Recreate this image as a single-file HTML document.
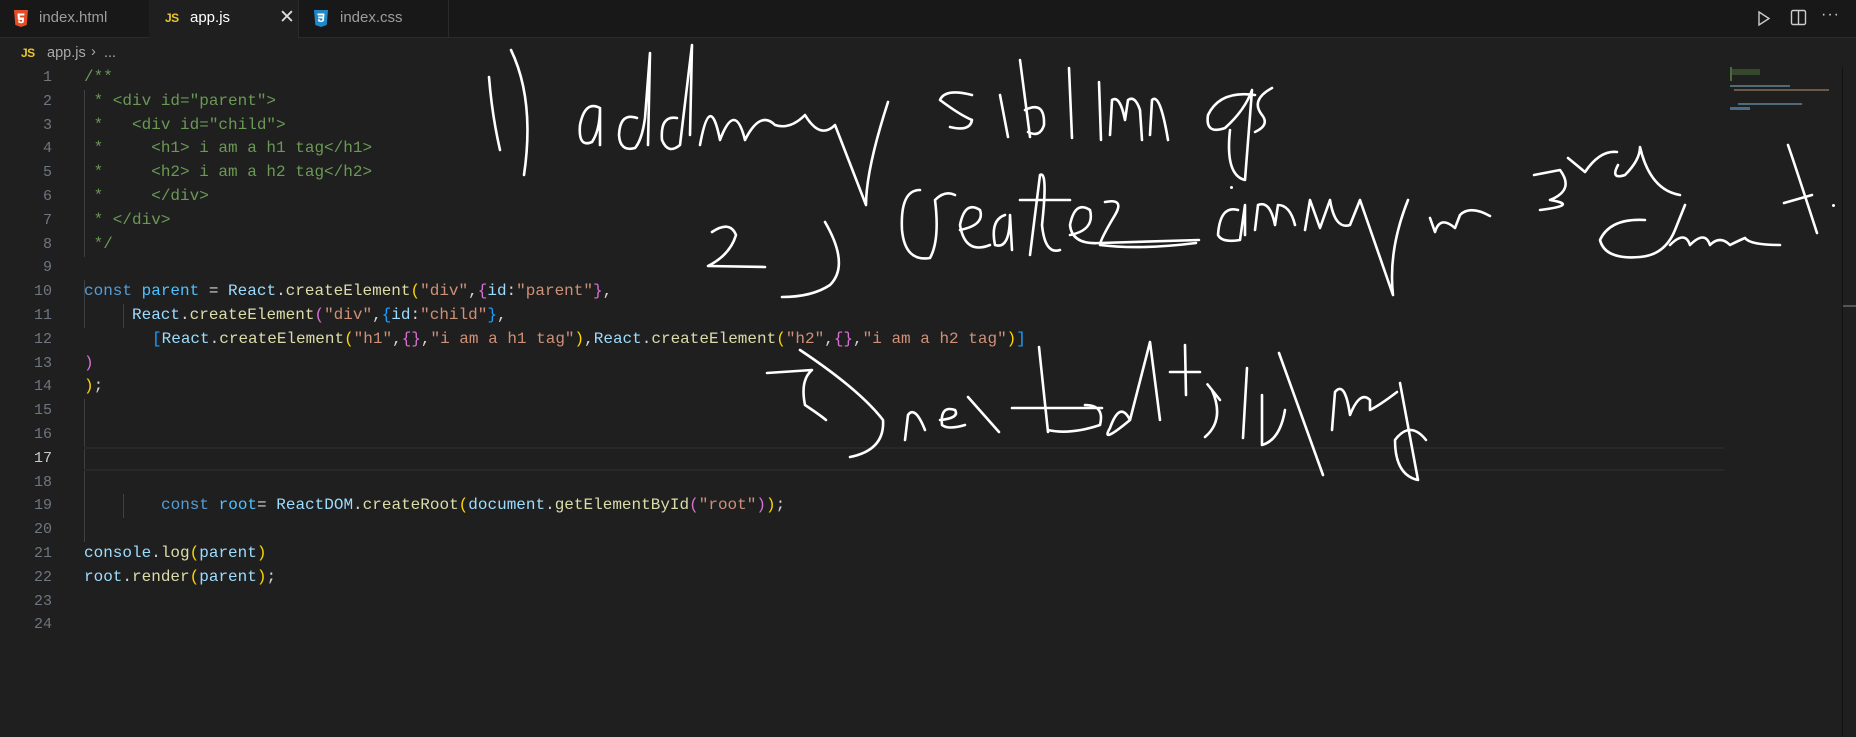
<!DOCTYPE html>
<html><head><meta charset="utf-8"><style>
*{margin:0;padding:0;box-sizing:border-box}
body{width:1856px;height:737px;background:#1f1f1f;overflow:hidden;position:relative;font-family:"Liberation Sans",sans-serif}
.tabs{position:absolute;left:0;top:0;width:1856px;height:38px;background:#181818;border-bottom:1px solid #2b2b2b}
.tab{position:absolute;top:0;height:38px;width:150px;border-right:1px solid #2b2b2b;color:#9d9d9d;font-size:15px;line-height:36px}
.tab.act{background:#1f1f1f;color:#fff;height:39px}
.ic{position:absolute;top:0}
.js{color:#e8c532;font-weight:bold;font-size:12px;letter-spacing:-0.5px}
.bc{position:absolute;left:0;top:44px;height:22px;font-size:14.5px;color:#a9a9a9}
.code{position:absolute;left:0;top:66px;font-family:"Liberation Mono",monospace;font-size:16px;line-height:23.8px;white-space:pre}
.ln{position:absolute;left:0;width:52px;text-align:right;color:#6e7681;font-family:"Liberation Mono",monospace;font-size:15px}
.l{position:absolute;left:84px;color:#d4d4d4}
.c{color:#6a9955}.k{color:#569cd6}.v{color:#4fc1ff}.r{color:#9cdcfe}.f{color:#dcdcaa}.s{color:#ce9178}
.g{color:#ffd700}.p{color:#da70d6}.b{color:#179fff}
.guide{position:absolute;width:1px;background:#404040}
</style></head><body>
<div class="tabs">
 <div class="tab" style="left:0"><svg class="ic" style="left:14px;top:10px" width="14" height="17" viewBox="0 0 14 17"><path d="M0 0h14l-1.3 15L7 17 1.3 15z" fill="#e44d26"/><path d="M3.5 3.5h7l-.2 2H5.7l.2 2h4.2l-.4 5L7 13.4 4.3 12.5l-.2-2h1.8l.1 1 1 .3 1-.3.1-1.6H3.9z" fill="#fff"/></svg><span style="position:absolute;left:39px">index.html</span></div>
 <div class="tab act" style="left:149px"><span class="js" style="position:absolute;left:16px">JS</span><span style="position:absolute;left:41px">app.js</span><span style="position:absolute;left:130px;font-size:19px;color:#ddd">✕</span></div>
 <div class="tab" style="left:299px"><svg class="ic" style="left:15px;top:10px" width="14" height="17" viewBox="0 0 14 17"><path d="M0 0h14l-1.3 15L7 17 1.3 15z" fill="#1f88c9"/><path d="M3.5 3.5h7l-.6 7.6L7 12.2l-2.9-1-.2-2h1.8l.1 1 1.2.4 1.2-.4.2-1.8H4.3l-.2-1.9h4.7l.1-1.1H3.6z" fill="#fff"/></svg><span style="position:absolute;left:41px">index.css</span></div>
 <svg style="position:absolute;left:1757px;top:10px" width="14" height="17" viewBox="0 0 14 17"><path d="M2 2l10 6.5L2 15z" fill="none" stroke="#ccc" stroke-width="1.4"/></svg>
 <svg style="position:absolute;left:1790px;top:9px" width="17" height="17" viewBox="0 0 17 17"><rect x="1.5" y="1.5" width="14" height="14" rx="1.5" fill="none" stroke="#ccc" stroke-width="1.4"/><path d="M8.5 1.5v14" stroke="#ccc" stroke-width="1.4"/></svg>
 <span style="position:absolute;left:1821px;top:6px;color:#ccc;font-size:16px;letter-spacing:1px">···</span>
</div>
<div class="bc"><span class="js" style="position:absolute;left:21px;top:2px">JS</span><span style="position:absolute;left:47px;top:1px">app.js</span><span style="position:absolute;left:91px;top:0px">›</span><span style="position:absolute;left:104px;top:1px">...</span></div>
<div class="guide" style="left:84px;top:90px;height:167px"></div>
<div class="guide" style="left:84px;top:280px;height:48px"></div>
<div class="guide" style="left:123px;top:304px;height:24px"></div>
<div class="guide" style="left:84px;top:399px;height:143px"></div>
<div class="guide" style="left:123px;top:494px;height:24px"></div>
<div style="position:absolute;left:84px;top:447px;width:1640px;height:24px;border-top:2px solid #282828;border-bottom:2px solid #282828"></div>
<div class="code">
<div class="ln" style="top:0">1</div><div class="l c" style="top:0">/**</div>
<div class="ln" style="top:23.8px">2</div><div class="l c" style="top:23.8px"> * &lt;div id="parent"&gt;</div>
<div class="ln" style="top:47.6px">3</div><div class="l c" style="top:47.6px"> *   &lt;div id="child"&gt;</div>
<div class="ln" style="top:71.4px">4</div><div class="l c" style="top:71.4px"> *     &lt;h1&gt; i am a h1 tag&lt;/h1&gt;</div>
<div class="ln" style="top:95.2px">5</div><div class="l c" style="top:95.2px"> *     &lt;h2&gt; i am a h2 tag&lt;/h2&gt;</div>
<div class="ln" style="top:119px">6</div><div class="l c" style="top:119px"> *     &lt;/div&gt;</div>
<div class="ln" style="top:142.8px">7</div><div class="l c" style="top:142.8px"> * &lt;/div&gt;</div>
<div class="ln" style="top:166.6px">8</div><div class="l c" style="top:166.6px"> */</div>
<div class="ln" style="top:190.4px">9</div>
<div class="ln" style="top:214.2px">10</div><div class="l" style="top:214.2px"><span class="k">const</span> <span class="v">parent</span> = <span class="r">React</span>.<span class="f">createElement</span><span class="g">(</span><span class="s">"div"</span>,<span class="p">{</span><span class="r">id</span>:<span class="s">"parent"</span><span class="p">}</span>,</div>
<div class="ln" style="top:238px">11</div><div class="l" style="top:238px;left:132px"><span class="r">React</span>.<span class="f">createElement</span><span class="p">(</span><span class="s">"div"</span>,<span class="b">{</span><span class="r">id</span>:<span class="s">"child"</span><span class="b">}</span>,</div>
<div class="ln" style="top:261.8px">12</div><div class="l" style="top:261.8px;left:152px"><span class="b">[</span><span class="r">React</span>.<span class="f">createElement</span><span class="g">(</span><span class="s">"h1"</span>,<span class="p">{}</span>,<span class="s">"i am a h1 tag"</span><span class="g">)</span>,<span class="r">React</span>.<span class="f">createElement</span><span class="g">(</span><span class="s">"h2"</span>,<span class="p">{}</span>,<span class="s">"i am a h2 tag"</span><span class="g">)</span><span class="b">]</span></div>
<div class="ln" style="top:285.6px">13</div><div class="l p" style="top:285.6px">)</div>
<div class="ln" style="top:309.4px">14</div><div class="l" style="top:309.4px"><span class="g">)</span>;</div>
<div class="ln" style="top:333.2px">15</div>
<div class="ln" style="top:357px">16</div>
<div class="ln" style="top:380.8px;color:#ccc">17</div>
<div class="ln" style="top:404.6px">18</div>
<div class="ln" style="top:428.4px">19</div><div class="l" style="top:428.4px;left:161px"><span class="k">const</span> <span class="v">root</span>= <span class="r">ReactDOM</span>.<span class="f">createRoot</span><span class="g">(</span><span class="r">document</span>.<span class="f">getElementById</span><span class="p">(</span><span class="s">"root"</span><span class="p">)</span><span class="g">)</span>;</div>
<div class="ln" style="top:452.2px">20</div>
<div class="ln" style="top:476px">21</div><div class="l" style="top:476px"><span class="r">console</span>.<span class="f">log</span><span class="g">(</span><span class="r">parent</span><span class="g">)</span></div>
<div class="ln" style="top:499.8px">22</div><div class="l" style="top:499.8px"><span class="r">root</span>.<span class="f">render</span><span class="g">(</span><span class="r">parent</span><span class="g">)</span>;</div>
<div class="ln" style="top:523.6px">23</div>
<div class="ln" style="top:547.4px">24</div>
</div>
<!-- minimap -->
<div style="position:absolute;left:1730px;top:67px;width:2px;height:14px;background:#4a6b3c"></div>
<div style="position:absolute;left:1732px;top:69px;width:28px;height:6px;background:#3f5a35;opacity:.7"></div>
<div style="position:absolute;left:1730px;top:85px;width:60px;height:2px;background:#506a7a"></div>
<div style="position:absolute;left:1734px;top:89px;width:95px;height:2px;background:#6a5a4a"></div>
<div style="position:absolute;left:1738px;top:103px;width:64px;height:2px;background:#506a7a"></div>
<div style="position:absolute;left:1730px;top:107px;width:20px;height:3px;background:#4a6a8a"></div>
<div style="position:absolute;left:1842px;top:67px;width:1px;height:670px;background:#111"></div>
<div style="position:absolute;left:1843px;top:305px;width:13px;height:2px;background:#555"></div>
<svg style="position:absolute;left:0;top:0" width="1856" height="737" fill="none" stroke="#fff" stroke-width="2.6" stroke-linecap="round" stroke-linejoin="round">
<path d="M489 77Q492 115 500 150M511 50Q535 100 524 175"/>
<path d="M600 108Q585 100 580 125Q578 148 592 142Q600 130 600 108L600 145"/>
<path d="M637 118Q620 112 619 135Q620 152 635 148Q642 140 645 118L650 53L648 145"/>
<path d="M677 118Q660 115 662 140Q668 155 680 145L692 45L690 135"/>
<path d="M700 145Q710 90 720 140Q735 100 745 140Q760 110 775 125Q790 130 805 115Q820 140 835 125L866 205Q866 170 888 102"/>
<path d="M972 95Q945 88 940 100Q960 115 972 120Q970 132 950 127M1000 95L1008 137M1020 60L1030 137M1025 110Q1045 100 1044 125Q1040 138 1028 132M1069 68L1072 138M1099 82L1101 140M1110 135L1112 100Q1120 95 1125 120L1128 100Q1135 95 1140 110L1142 140M1150 135L1152 100Q1160 92 1168 140"/>
<path d="M1255 95Q1220 90 1208 115Q1205 135 1225 128Q1245 110 1252 90L1245 180Q1225 175 1230 130M1272 88Q1250 100 1262 115Q1270 125 1255 132"/>
<path d="M712 232Q730 220 736 235Q730 255 708 266L765 267M825 222Q850 265 830 285Q812 297 782 297"/>
<path d="M920 190Q900 190 902 230Q905 262 930 258Q940 240 935 200Q945 190 955 195M960 230Q985 225 980 210Q965 200 960 225Q965 255 990 245M1005 215Q990 220 995 245Q1010 250 1010 215L1012 250M1030 255L1040 175Q1048 170 1042 225Q1045 255 1060 250M1020 200L1070 200M1070 235Q1095 230 1090 210Q1075 200 1070 225Q1072 245 1100 243L1199 240"/>
<path d="M1238 210Q1220 205 1218 235Q1222 243 1240 240L1245 205L1245 235M1255 230L1258 205Q1270 200 1275 225L1278 205Q1290 205 1295 225M1305 230L1310 200L1320 228L1330 200Q1335 230 1350 225L1360 200L1393 295Q1388 250 1408 200M1430 218L1435 232Q1440 215 1455 228L1460 215Q1470 205 1490 216"/>
<path d="M1105 202Q1125 198 1115 215Q1100 240 1100 245Q1140 250 1196 243"/>
<path d="M1534 175L1560 170Q1575 190 1550 200Q1580 205 1540 210M1568 158L1585 172Q1600 150 1617 152M1618 165Q1610 180 1625 175Q1640 160 1640 147Q1650 190 1680 195"/>
<path d="M1645 220Q1610 218 1600 240Q1605 260 1640 257Q1665 255 1675 230L1685 205M1670 245Q1685 230 1690 245Q1705 230 1710 245Q1720 235 1730 245Q1740 240 1745 238Q1750 245 1780 245M1788 145Q1795 165 1817 233M1784 203L1812 195"/>
<path d="M767 373L812 370Q800 380 805 405Q820 415 826 420M800 350Q860 390 883 420Q885 450 850 457"/>
<path d="M905 440L908 415Q915 405 925 430M940 420Q960 418 955 410Q940 405 942 425Q948 430 965 425M968 397L999 432M1039 347L1048 432M1012 408L1102 408M1048 430Q1070 435 1100 425Q1105 405 1085 405M1130 420Q1120 400 1110 428Q1100 445 1130 420L1150 342Q1155 380 1160 420M1170 372L1200 372M1185 345L1186 395"/>
<path d="M1220 400Q1200 375 1212 390Q1225 420 1205 437M1247 368L1243 438M1279 353L1323 475M1262 395L1262 445Q1280 440 1285 410M1332 430L1335 392Q1345 380 1350 415Q1360 390 1370 400L1370 410Q1380 405 1397 392M1400 383L1418 480Q1395 475 1395 440Q1410 420 1426 440"/>
</svg>
<div style="position:absolute;left:1230px;top:186px;width:3px;height:3px;background:#fff;border-radius:50%"></div>
<div style="position:absolute;left:1832px;top:204px;width:3px;height:3px;background:#fff;border-radius:50%"></div>
</body></html>
